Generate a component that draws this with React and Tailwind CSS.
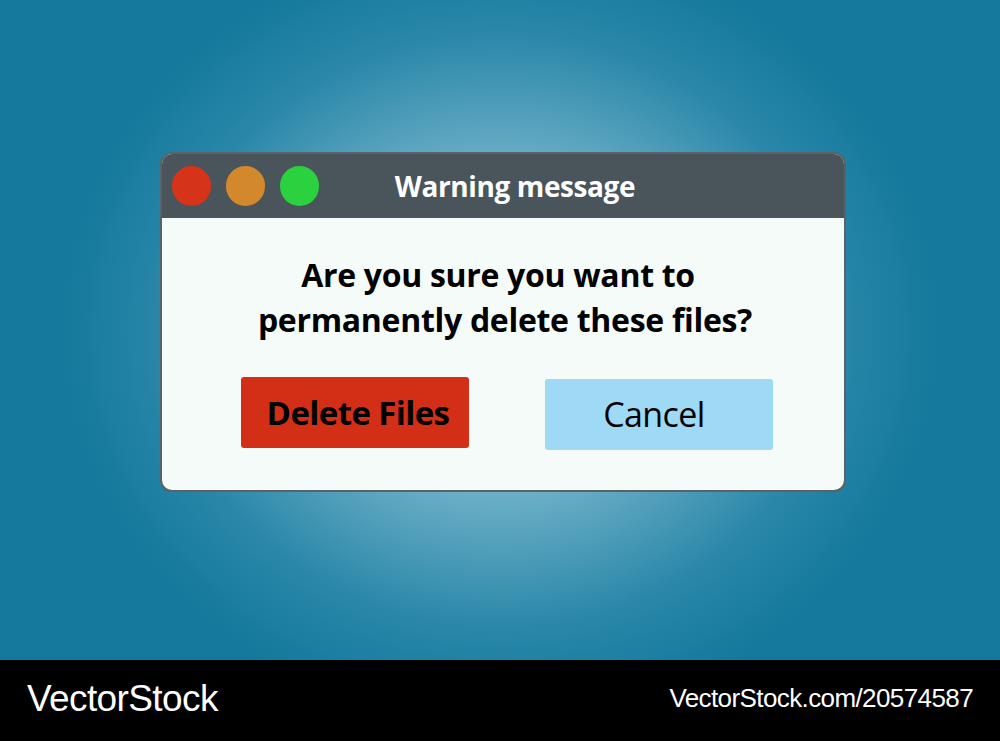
import React from 'react';

function TrafficLights() {
  return (
    <div className="flex items-center gap-[15px]">
      <span className="block w-[39px] h-[40px] rounded-full bg-[#d63418]" />
      <span className="block w-[39px] h-[40px] rounded-full bg-[#d4882c]" />
      <span className="block w-[39px] h-[40px] rounded-full bg-[#2bd13f]" />
    </div>
  );
}

export default function App() {
  return (
    <div
      className="w-[1000px] h-[741px] flex flex-col overflow-hidden"
      style={{ fontFamily: '"Open Sans", "Noto Sans", sans-serif' }}
    >
      <main className="h-[660px] bg-[radial-gradient(ellipse_440px_390px_at_50%_50%,#b8dfea_0%,#6cafc7_42%,#2a87a9_76%,#14799c_100%)] flex items-start justify-center pt-[152px]">
        <div className="w-[686px] h-[340px] ml-[6px] rounded-[12px] overflow-hidden border-2 border-[#5a6268] bg-[#f5fbf9] flex flex-col">
          {/* title bar */}
          <div className="h-[64px] bg-[#4a545b] flex items-center pl-[10px] relative shrink-0">
            <TrafficLights />
            <h1 className="absolute left-0 right-0 text-center text-white font-bold text-[28px] tracking-[-0.4px] ml-[24px]">
              Warning message
            </h1>
          </div>

          {/* body */}
          <div className="flex-1 flex flex-col items-center pt-[34px]">
            <p className="text-center font-bold text-[32px] leading-[45px] text-black tracking-[-0.3px] ml-[4px]">
              <span className="block -ml-[14px]">Are you sure you want to</span>
              <span className="block">permanently delete these files?</span>
            </p>

            <div className="flex gap-[76px] mt-[35px] ml-[8px]">
              <button className="w-[228px] h-[71px] rounded-[3px] bg-[#d32f17] text-black font-bold text-[33px] tracking-[-0.6px] pl-[6px]">
                Delete Files
              </button>
              <button className="w-[228px] h-[71px] mt-[2px] rounded-[3px] bg-[#9ed9f5] text-black text-[34px] tracking-[-0.6px] pr-[10px]">
                Cancel
              </button>
            </div>
          </div>
        </div>
      </main>

      <footer className="h-[81px] bg-black flex items-center justify-between px-[27px] pb-[4px]" style={{ fontFamily: '"Liberation Sans", Arial, sans-serif' }}>
        <span className="text-white text-[37px] tracking-[-0.6px]">VectorStock</span>
        <span className="text-white text-[26px] tracking-[-0.6px]">VectorStock.com/20574587</span>
      </footer>
    </div>
  );
}
